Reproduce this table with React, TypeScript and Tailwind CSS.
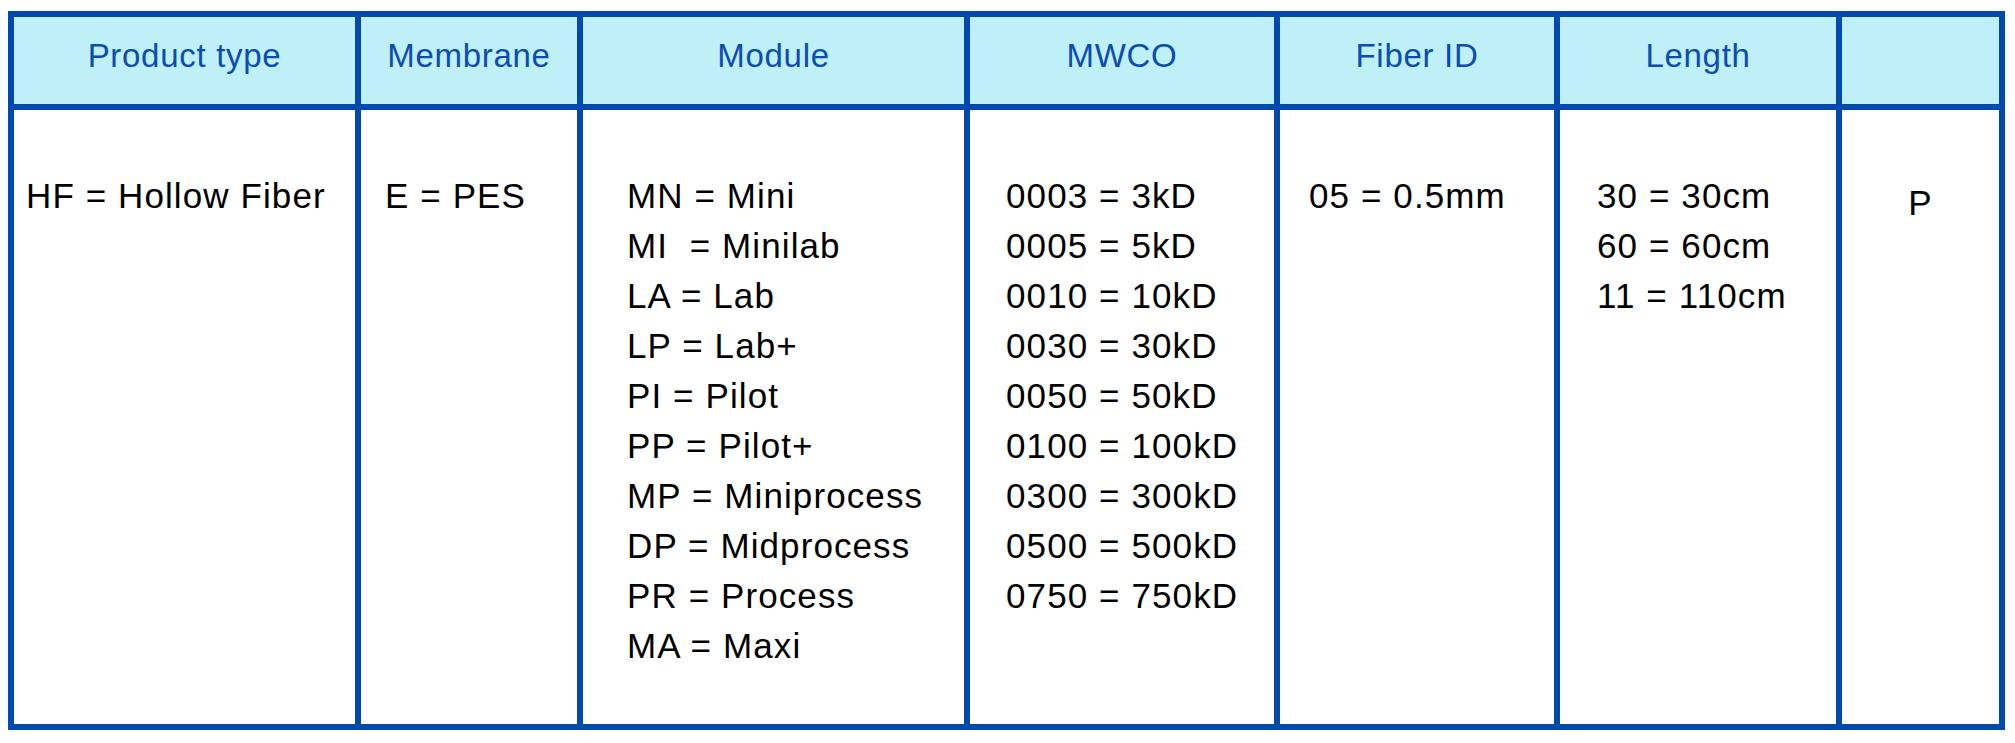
import React from "react";

const headers = ["Product type", "Membrane", "Module", "MWCO", "Fiber ID", "Length", ""];

const modules = [
  "MN = Mini",
  "MI  = Minilab",
  "LA = Lab",
  "LP = Lab+",
  "PI = Pilot",
  "PP = Pilot+",
  "MP = Miniprocess",
  "DP = Midprocess",
  "PR = Process",
  "MA = Maxi",
];

const mwco = [
  "0003 = 3kD",
  "0005 = 5kD",
  "0010 = 10kD",
  "0030 = 30kD",
  "0050 = 50kD",
  "0100 = 100kD",
  "0300 = 300kD",
  "0500 = 500kD",
  "0750 = 750kD",
];

const lengths = ["30 = 30cm", "60 = 60cm", "11 = 110cm"];

function Lines({ items }: { items: string[] }) {
  return (
    <div className="flex flex-col">
      {items.map((t) => (
        <div key={t} className="whitespace-pre leading-[50px] tracking-[1.1px]">
          {t}
        </div>
      ))}
    </div>
  );
}

export default function App() {
  return (
    <div
      className="w-[2015px] h-[743px] bg-white pt-[11px] pl-[8px]"
      style={{ fontFamily: '"Liberation Sans", Arial, sans-serif' }}
    >
      <div className="grid w-[1997px] h-[719px] bg-[#0249ad] p-[6px] gap-[6px] grid-cols-[341px_216px_381px_304px_274px_276px_157px] grid-rows-[87px_614px]">
        {headers.map((h, i) => (
          <div
            key={i}
            className="bg-[#bfeff7] flex justify-center items-start pt-[20px] text-[33px] leading-[38px] tracking-[0.7px] text-[#0b4db3]"
          >
            {h}
          </div>
        ))}

        <div className="bg-white pt-[61px] pl-[12px] text-[35px] text-black">
          <Lines items={["HF = Hollow Fiber"]} />
        </div>
        <div className="bg-white pt-[61px] pl-[24px] text-[35px] text-black">
          <Lines items={["E = PES"]} />
        </div>
        <div className="bg-white pt-[61px] pl-[44px] text-[35px] text-black">
          <Lines items={modules} />
        </div>
        <div className="bg-white pt-[61px] pl-[36px] text-[35px] text-black">
          <Lines items={mwco} />
        </div>
        <div className="bg-white pt-[61px] pl-[29px] text-[35px] text-black">
          <Lines items={["05 = 0.5mm"]} />
        </div>
        <div className="bg-white pt-[61px] pl-[37px] text-[35px] text-black">
          <Lines items={lengths} />
        </div>
        <div className="bg-white pt-[68px] flex justify-center text-[35px] text-black">
          <Lines items={["P"]} />
        </div>
      </div>
    </div>
  );
}
